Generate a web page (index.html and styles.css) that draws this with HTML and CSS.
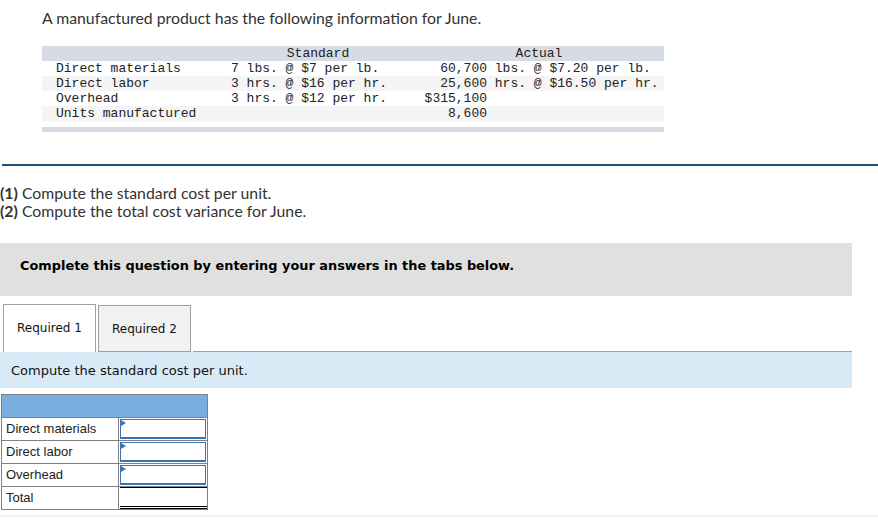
FILE: index.html
```html
<!DOCTYPE html>
<html>
<head>
<meta charset="utf-8">
<link rel="stylesheet" href="styles.css">
</head>
<body>
<div class="intro">
  <p class="lead">A manufactured product has the following information for June.</p>
  <div class="mono-table">
    <div class="row head">
      <span></span>
      <span class="h-std">Standard</span>
      <span class="h-act">Actual</span>
    </div>
    <div class="row">
      <span class="lbl">Direct materials</span>
      <span>7 lbs. @ $7 per lb.</span>
      <span class="act"><span class="num">60,700</span><span class="rest"> lbs. @ $7.20 per lb.</span></span>
    </div>
    <div class="row alt">
      <span class="lbl">Direct labor</span>
      <span>3 hrs. @ $16 per hr.</span>
      <span class="act"><span class="num">25,600</span><span class="rest"> hrs. @ $16.50 per hr.</span></span>
    </div>
    <div class="row">
      <span class="lbl">Overhead</span>
      <span>3 hrs. @ $12 per hr.</span>
      <span class="act"><span class="num">$315,100</span></span>
    </div>
    <div class="row alt">
      <span class="lbl">Units manufactured</span>
      <span></span>
      <span class="act"><span class="num">8,600</span></span>
    </div>
    <div class="foot-bar"></div>
  </div>
</div>
<div class="rule"></div>
<div class="reqs">
  <p><b>(1)</b> Compute the standard cost per unit.</p>
  <p><b>(2)</b> Compute the total cost variance for June.</p>
</div>
<div class="notice">Complete this question by entering your answers in the tabs below.</div>
<div class="tabs">
  <div class="tab active">Required 1</div>
  <div class="tab">Required 2</div>
  <div class="tab-fill"></div>
</div>
<div class="panel">Compute the standard cost per unit.</div>
<table class="answer">
  <tr class="ahead"><td></td><td></td></tr>
  <tr><td class="alabel">Direct materials</td><td class="acell"><div class="input"></div></td></tr>
  <tr><td class="alabel">Direct labor</td><td class="acell"><div class="input"></div></td></tr>
  <tr><td class="alabel">Overhead</td><td class="acell"><div class="input"></div></td></tr>
  <tr><td class="alabel">Total</td><td class="acell total"><div class="tot"></div></td></tr>
</table>
<div class="bottom-line"></div>
</body>
</html>
```
FILE: styles.css
```css
html, body {
  margin: 0;
  padding: 0;
  background: #fff;
}
body {
  font-family: Lato, "Open Sans", sans-serif;
  color: #333;
  width: 878px;
  overflow: hidden;
}
.intro {
  padding: 0 0 0 42px;
}
.lead {
  margin: 0;
  padding-top: 9px;
  font-size: 15.8px;
  line-height: 18px;
  color: #333;
}
.mono-table {
  margin-top: 19px;
  width: 622px;
  font-family: "Liberation Mono", monospace;
  font-size: 13px;
  color: #222;
}
.row {
  display: grid;
  grid-template-columns: 189px 183px 250px;
  height: 15px;
  line-height: 15px;
  white-space: pre;
}
.row.head {
  background: #d7dbe3;
}
.row.alt {
  background: #f5f5f5;
}
.lbl {
  padding-left: 14px;
}
.h-std {
  text-align: center;
  padding-right: 9px;
}
.h-act {
  text-align: center;
}
.act {
  display: flex;
}
.num {
  width: 73px;
  text-align: right;
}
.foot-bar {
  margin-top: 6px;
  height: 5px;
  background: #d7dbe3;
}
.rule {
  margin: 32px 0 0 2px;
  height: 2px;
  background: #1f4e7c;
}
.reqs {
  margin-top: 18px;
  font-size: 15.8px;
  line-height: 18px;
}
.reqs p {
  margin: 0;
  color: #333;
}
.reqs b {
  font-weight: 700;
}
.notice {
  margin-top: 23px;
  width: 832px;
  height: 53px;
  padding-left: 20px;
  background: #e0e0e0;
  font-family: "DejaVu Sans", Verdana, sans-serif;
  font-weight: bold;
  font-size: 12.9px;
  line-height: 45px;
  color: #000;
}
.tabs {
  display: flex;
  margin-top: 8px;
  padding-left: 3px;
  width: 849px;
  height: 48px;
  align-items: flex-end;
}
.tab {
  box-sizing: border-box;
  width: 93px;
  height: 47px;
  border: 1px solid #a0a0a0;
  background: #f2f2f2;
  font-family: "DejaVu Sans", Verdana, sans-serif;
  font-size: 12px;
  color: #111;
  text-align: center;
  line-height: 47px;
  margin-right: 2px;
}
.tab.active {
  height: 48px;
  background: #fff;
  border-bottom: none;
}
.tab-fill {
  flex: 1;
  height: 1px;
  background: #a0a0a0;
}
.panel {
  width: 841px;
  height: 36px;
  padding-left: 11px;
  background: #d9eaf7;
  font-family: "DejaVu Sans", Verdana, sans-serif;
  font-size: 13px;
  line-height: 38px;
  color: #111;
}
.answer {
  margin: 6px 0 0 1px;
  border-collapse: collapse;
  font-family: "Liberation Sans", Arial, sans-serif;
  font-size: 13px;
  color: #222;
}
.answer td {
  border: 1px solid #808080;
  padding: 0;
  height: 22px;
}
.ahead td {
  background: #79aee0;
}
.ahead td:first-child {
  border-right: none;
}
.ahead td:last-child {
  border-left: none;
}
.alabel {
  width: 112px;
  padding-left: 4px !important;
  line-height: 22px;
}
.acell {
  width: 88px;
  position: relative;
}
.input {
  box-sizing: border-box;
  margin: 1px;
  height: 20px;
  border: 1px solid #3a73b5;
  border-width: 1px 1px 2px 1px;
  position: relative;
  background: #fff;
}
.input::before {
  content: "";
  position: absolute;
  left: 0;
  top: 0;
  border-left: 5px solid #3a73b5;
  border-top: 3px solid transparent;
  border-bottom: 3px solid transparent;
}
.tot {
  box-sizing: border-box;
  margin: 0 0 0 1px;
  height: 22px;
  border-top: 1px solid #000;
  border-bottom: 3px double #000;
}
.bottom-line {
  margin-top: 5px;
  height: 2px;
  background: #efefef;
}
```
